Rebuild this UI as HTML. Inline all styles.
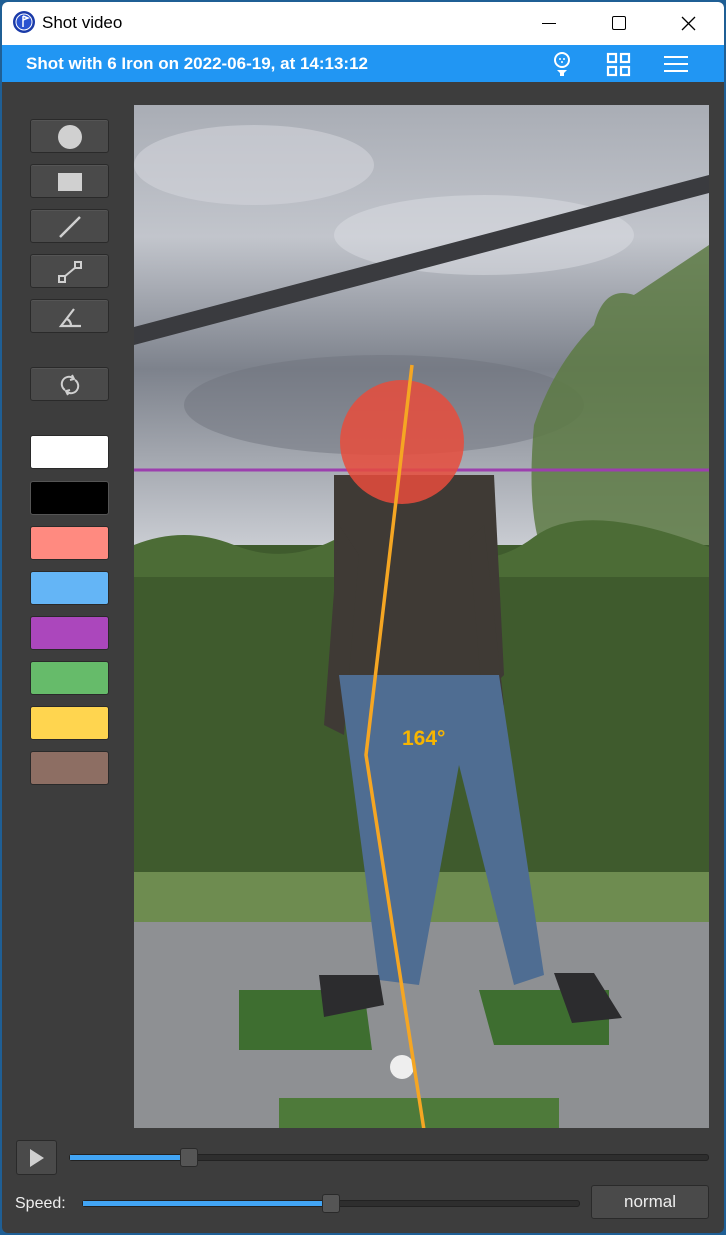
<!DOCTYPE html><html><head><style>
*{margin:0;padding:0;box-sizing:border-box}
body{width:726px;height:1235px;background:#1f5f95;font-family:"Liberation Sans",sans-serif;position:relative;overflow:hidden}
.win{position:absolute;left:2px;top:2px;width:722px;height:1231px;background:#3d3d3d;border-radius:6px;overflow:hidden}
.title{position:absolute;left:0;top:0;width:722px;height:43px;background:#fff}
.bar{position:absolute;left:0;top:43px;width:722px;height:37px;background:#2196f3;color:#fff;font-weight:bold;font-size:17px;line-height:37px;padding-left:24px}
.btn{position:absolute;left:28px;width:79px;height:34px;background:#4a4a4a;border:1px solid #2a2a2a;border-radius:3px;box-shadow:inset 0 1px 0 #555}
.sw{position:absolute;left:28px;width:79px;height:34px;border:1px solid #2a2a2a;border-radius:3px}
.abs{position:absolute}
</style></head><body><div class="win">
<div class="title">
<svg class="abs" style="left:10px;top:8px" width="24" height="24"><circle cx="12" cy="12" r="11" fill="#1a3aa8"/><circle cx="12" cy="12" r="8" fill="#2952d0" stroke="#fff" stroke-width="1"/><path d="M11 6v11M11 6l5 2-5 2" stroke="#fff" stroke-width="1.5" fill="none"/></svg>
<div class="abs" style="left:40px;top:11px;font-size:17px;color:#000">Shot video</div>
<div class="abs" style="left:540px;top:21px;width:14px;height:1px;background:#000"></div>
<div class="abs" style="left:610px;top:14px;width:14px;height:14px;border:1.5px solid #000;border-radius:2px"></div>
<svg class="abs" style="left:679px;top:14px" width="15" height="15"><path d="M1 1L14 14M14 1L1 14" stroke="#000" stroke-width="1.3"/></svg>
</div>
<div class="bar">Shot with 6 Iron on 2022-06-19, at 14:13:12
<svg class="abs" style="left:550px;top:6px" width="20" height="26"><circle cx="10" cy="9" r="7" fill="none" stroke="#fff" stroke-width="2"/><circle cx="8" cy="8" r="1" fill="#fff"/><circle cx="12" cy="8" r="1" fill="#fff"/><circle cx="10" cy="11" r="1" fill="#fff"/><path d="M5 19h10l-3 3v3h-4v-3z" fill="#fff"/></svg>
<svg class="abs" style="left:604px;top:7px" width="26" height="26" fill="none" stroke="#fff" stroke-width="2.2"><rect x="2" y="2" width="8" height="8"/><rect x="15" y="2" width="8" height="8"/><rect x="2" y="15" width="8" height="8"/><rect x="15" y="15" width="8" height="8"/></svg>
<svg class="abs" style="left:661px;top:9px" width="26" height="20" stroke="#fff" stroke-width="2"><path d="M1 3h24M1 10h24M1 17h24"/></svg>
</div>
<div class="btn" style="top:117px"><div class="abs" style="left:27px;top:5px;width:24px;height:24px;border-radius:50%;background:#d0d0d0"></div></div>
<div class="btn" style="top:162px"><div class="abs" style="left:27px;top:8px;width:24px;height:18px;background:#d0d0d0"></div></div>
<div class="btn" style="top:207px"><svg class="abs" style="left:27px;top:5px" width="24" height="24"><path d="M2 22L22 2" stroke="#d0d0d0" stroke-width="2.5"/></svg></div>
<div class="btn" style="top:252px"><svg class="abs" style="left:27px;top:5px" width="24" height="24" stroke="#d0d0d0" fill="none" stroke-width="2"><rect x="1" y="16" width="6" height="6"/><rect x="17" y="2" width="6" height="6"/><path d="M6 17L18 7"/></svg></div>
<div class="btn" style="top:297px"><svg class="abs" style="left:27px;top:5px" width="24" height="24" stroke="#d0d0d0" fill="none" stroke-width="2.2"><path d="M16 4L3 21h20M9 14q4 2 4 7"/></svg></div>
<div class="btn" style="top:365px"><svg class="abs" style="left:29px;top:6px" width="20" height="22" stroke="#d0d0d0" fill="none" stroke-width="2"><path d="M5 16a7 7 0 0 1 8-12M15 6a7 7 0 0 1-8 12"/><path d="M12 1l2 4-4 1M8 21l-2-4 4-1"/></svg></div>
<div class="sw" style="top:433px;background:#fff"></div>
<div class="sw" style="top:479px;background:#000;border-color:#555"></div>
<div class="sw" style="top:524px;background:#ff8a80"></div>
<div class="sw" style="top:569px;background:#64b5f6"></div>
<div class="sw" style="top:614px;background:#ab47bc"></div>
<div class="sw" style="top:659px;background:#66bb6a"></div>
<div class="sw" style="top:704px;background:#ffd54f"></div>
<div class="sw" style="top:749px;background:#8d6e63"></div>
<svg class="abs" style="left:132px;top:103px" width="575" height="1023">
<defs><linearGradient id="sky" x1="0" y1="0" x2="0" y2="1"><stop offset="0" stop-color="#a9adb5"/><stop offset=".3" stop-color="#c2c5cc"/><stop offset=".6" stop-color="#7d828c"/><stop offset="1" stop-color="#c9ccd2"/></linearGradient></defs>
<rect width="575" height="440" fill="url(#sky)"/>
<ellipse cx="120" cy="60" rx="120" ry="40" fill="#d2d4da" opacity=".6"/>
<ellipse cx="350" cy="130" rx="150" ry="40" fill="#dcdee3" opacity=".5"/>
<ellipse cx="250" cy="300" rx="200" ry="50" fill="#6f747d" opacity=".5"/>
<path d="M400 320q20-60 60-100q10-40 40-30q30-20 75-50v330H420q-30-40-20-150z" fill="#5d7a44" opacity=".85"/>
<rect y="440" width="575" height="330" fill="#3f5b2d"/>
<path d="M0 440q50-20 100 0t100-5 100 5 100-8 175 10v30H0z" fill="#4c6c36"/>
<rect y="767" width="575" height="50" fill="#6e8c50"/>
<rect y="817" width="575" height="206" fill="#8e9093"/>
<path d="M0 222L575 70v18L0 240z" fill="#3a3b3f"/>
<path d="M105 885h125l8 60h-133zM345 885h130v55h-115z" fill="#3e6e30"/>
<rect x="145" y="993" width="280" height="30" fill="#4e7a3a"/>
<path d="M200 370h160l10 200-10 10h-150l-10-10z" fill="#3f3a35"/>
<path d="M205 420l-15 200 20 10 15-180zM350 420l20 180-20 15-15-180z" fill="#3f3a35"/>
<path d="M205 570h160l45 300-30 10-55-220-40 220-40-5z" fill="#4f6d92"/>
<path d="M185 870h60l5 30-60 12zM420 868h40l28 45-50 5z" fill="#2c2c2e"/>
<circle cx="268" cy="962" r="12" fill="#eee"/>
<path d="M0 365H575" stroke="#9c3fae" stroke-width="3"/>
<circle cx="268" cy="337" r="62" fill="#e74c3c" opacity=".85"/>
<path d="M278 260L232 650L290 1025" stroke="#f5a623" stroke-width="3.5" fill="none"/>
<text x="268" y="640" fill="#f7b500" font-family="Liberation Sans" font-weight="bold" font-size="21">164°</text>
</svg>
<div class="abs" style="left:14px;top:1138px;width:41px;height:35px;background:#4a4a4a;border:1px solid #2a2a2a;border-radius:3px"><svg class="abs" style="left:12px;top:7px" width="16" height="20"><path d="M1 1L15 10L1 19z" fill="#cfcfcf"/></svg></div>
<div class="abs" style="left:67px;top:1152px;width:640px;height:7px;background:#2e2e2e;border:1px solid #222;border-radius:3px"></div>
<div class="abs" style="left:68px;top:1153px;width:112px;height:5px;background:#42a5f5"></div>
<div class="abs" style="left:178px;top:1146px;width:18px;height:19px;background:#555;border:1px solid #2a2a2a;border-radius:3px"></div>
<div class="abs" style="left:13px;top:1193px;font-size:16px;color:#eee">Speed:</div>
<div class="abs" style="left:80px;top:1198px;width:498px;height:7px;background:#2e2e2e;border:1px solid #222;border-radius:3px"></div>
<div class="abs" style="left:81px;top:1199px;width:240px;height:5px;background:#42a5f5"></div>
<div class="abs" style="left:320px;top:1192px;width:18px;height:19px;background:#555;border:1px solid #2a2a2a;border-radius:3px"></div>
<div class="abs" style="left:589px;top:1183px;width:118px;height:34px;background:#4a4a4a;border:1px solid #2a2a2a;border-radius:3px;color:#eee;font-size:17px;text-align:center;line-height:32px">normal</div>
</div></body></html>
